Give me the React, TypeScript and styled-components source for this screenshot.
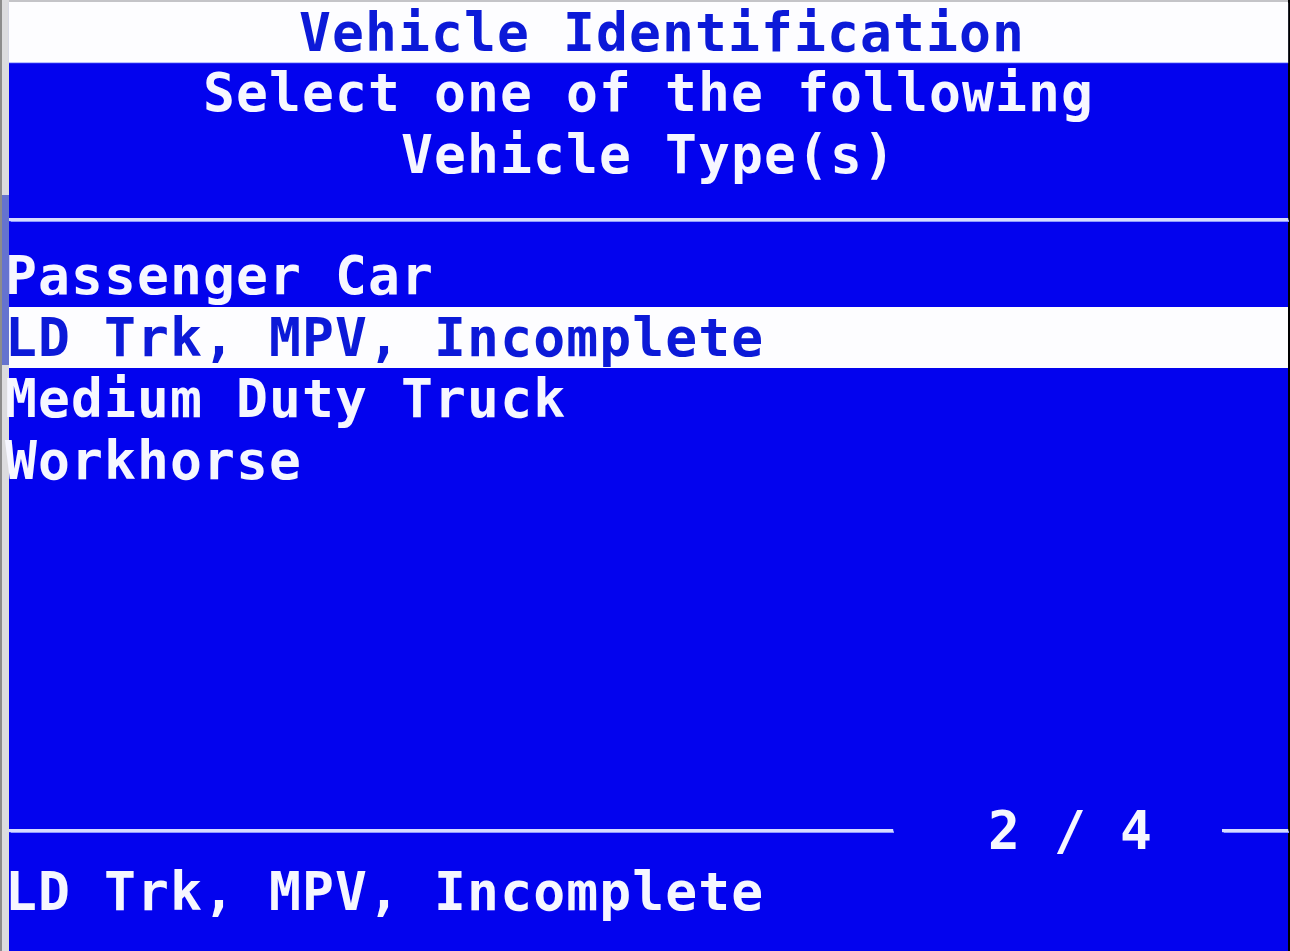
import { createGlobalStyle, styled } from 'styled-components';

const GlobalStyle = createGlobalStyle`
  html, body {
    margin: 0;
    padding: 0;
    background: #000;
  }
  body {
    font-family: "DejaVu Sans Mono", "Liberation Mono", monospace;
  }
`;

const LINE = 61.6;

const Frame = styled.div`
  display: flex;
  width: 1290px;
  height: 951px;
  overflow: hidden;
  background: #000;
`;

const Bezel = styled.div`
  display: flex;
  flex-direction: column;
  width: 7px;
  border-left: 2px solid #8c8c8c;
  background: #dcdcdf;
`;

const BezelPart = styled.div<{ $size?: number; $tint?: boolean }>`
  flex: ${(p) => (p.$size ? `0 0 ${p.$size}px` : '1')};
  background: ${(p) => (p.$tint ? '#6573cf' : '#dcdcdf')};
`;

const Screen = styled.div`
  flex: 1;
  display: flex;
  flex-direction: column;
  background: #0303ee;
  border-top: 2px solid #c4c4c8;
  margin-right: 2px;
  padding-bottom: 28px;
  font-size: 53px;
  font-weight: bold;
  letter-spacing: 1.1px;
  line-height: ${LINE}px;
  white-space: pre;
  color: #f6f7ff;
`;

const TitleBar = styled.div`
  height: 60px;
  line-height: ${LINE}px;
  background: #fdfdff;
  color: #0c1ad8;
  text-align: center;
  padding-left: 27px;
  box-shadow: 0 1px 1px #b8c0ff;
`;

const HeaderLine = styled.div`
  height: ${LINE}px;
  text-align: center;
`;

const Rule = styled.div<{ $width?: number }>`
  height: 3px;
  background: #d6dcff;
  box-shadow: 0 0 1px 0.5px #8f9aff;
  flex: ${(p) => (p.$width ? `0 0 ${p.$width}px` : '1')};
`;

const HeaderRule = styled(Rule)`
  margin: 33px 0 24px;
  flex: none;
`;

const List = styled.div`
  display: flex;
  flex-direction: column;
`;

const Row = styled.div<{ $selected?: boolean }>`
  height: 61.5px;
  line-height: 61.5px;
  text-indent: -4px;
  background: ${(p) => (p.$selected ? '#fdfdff' : 'transparent')};
  color: ${(p) => (p.$selected ? '#0c1ad8' : '#f6f7ff')};
`;

const Spacer = styled.div`
  flex: 1;
`;

const Pager = styled.div`
  display: flex;
  align-items: center;
  height: ${LINE}px;
`;

const PageLabel = styled.span`
  margin: 0 69px 0 95px;
`;

const StatusLine = styled.div`
  height: ${LINE}px;
  text-indent: -4px;
`;

const vehicleTypes = [
  'Passenger Car',
  'LD Trk, MPV, Incomplete',
  'Medium Duty Truck',
  'Workhorse',
];

export default function App() {
  const selected = 1;

  return (
    <>
      <GlobalStyle />
      <Frame>
        <Bezel>
          <BezelPart $size={195} />
          <BezelPart $size={170} $tint />
          <BezelPart />
        </Bezel>
        <Screen>
          <TitleBar>Vehicle Identification</TitleBar>
          <HeaderLine>Select one of the following</HeaderLine>
          <HeaderLine>Vehicle Type(s)</HeaderLine>
          <HeaderRule />
          <List>
            {vehicleTypes.map((name, i) => (
              <Row key={name} $selected={i === selected}>
                {name}
              </Row>
            ))}
          </List>
          <Spacer />
          <Pager>
            <Rule />
            <PageLabel>
              {selected + 1} / {vehicleTypes.length}
            </PageLabel>
            <Rule $width={66} />
          </Pager>
          <StatusLine>{vehicleTypes[selected]}</StatusLine>
        </Screen>
      </Frame>
    </>
  );
}
